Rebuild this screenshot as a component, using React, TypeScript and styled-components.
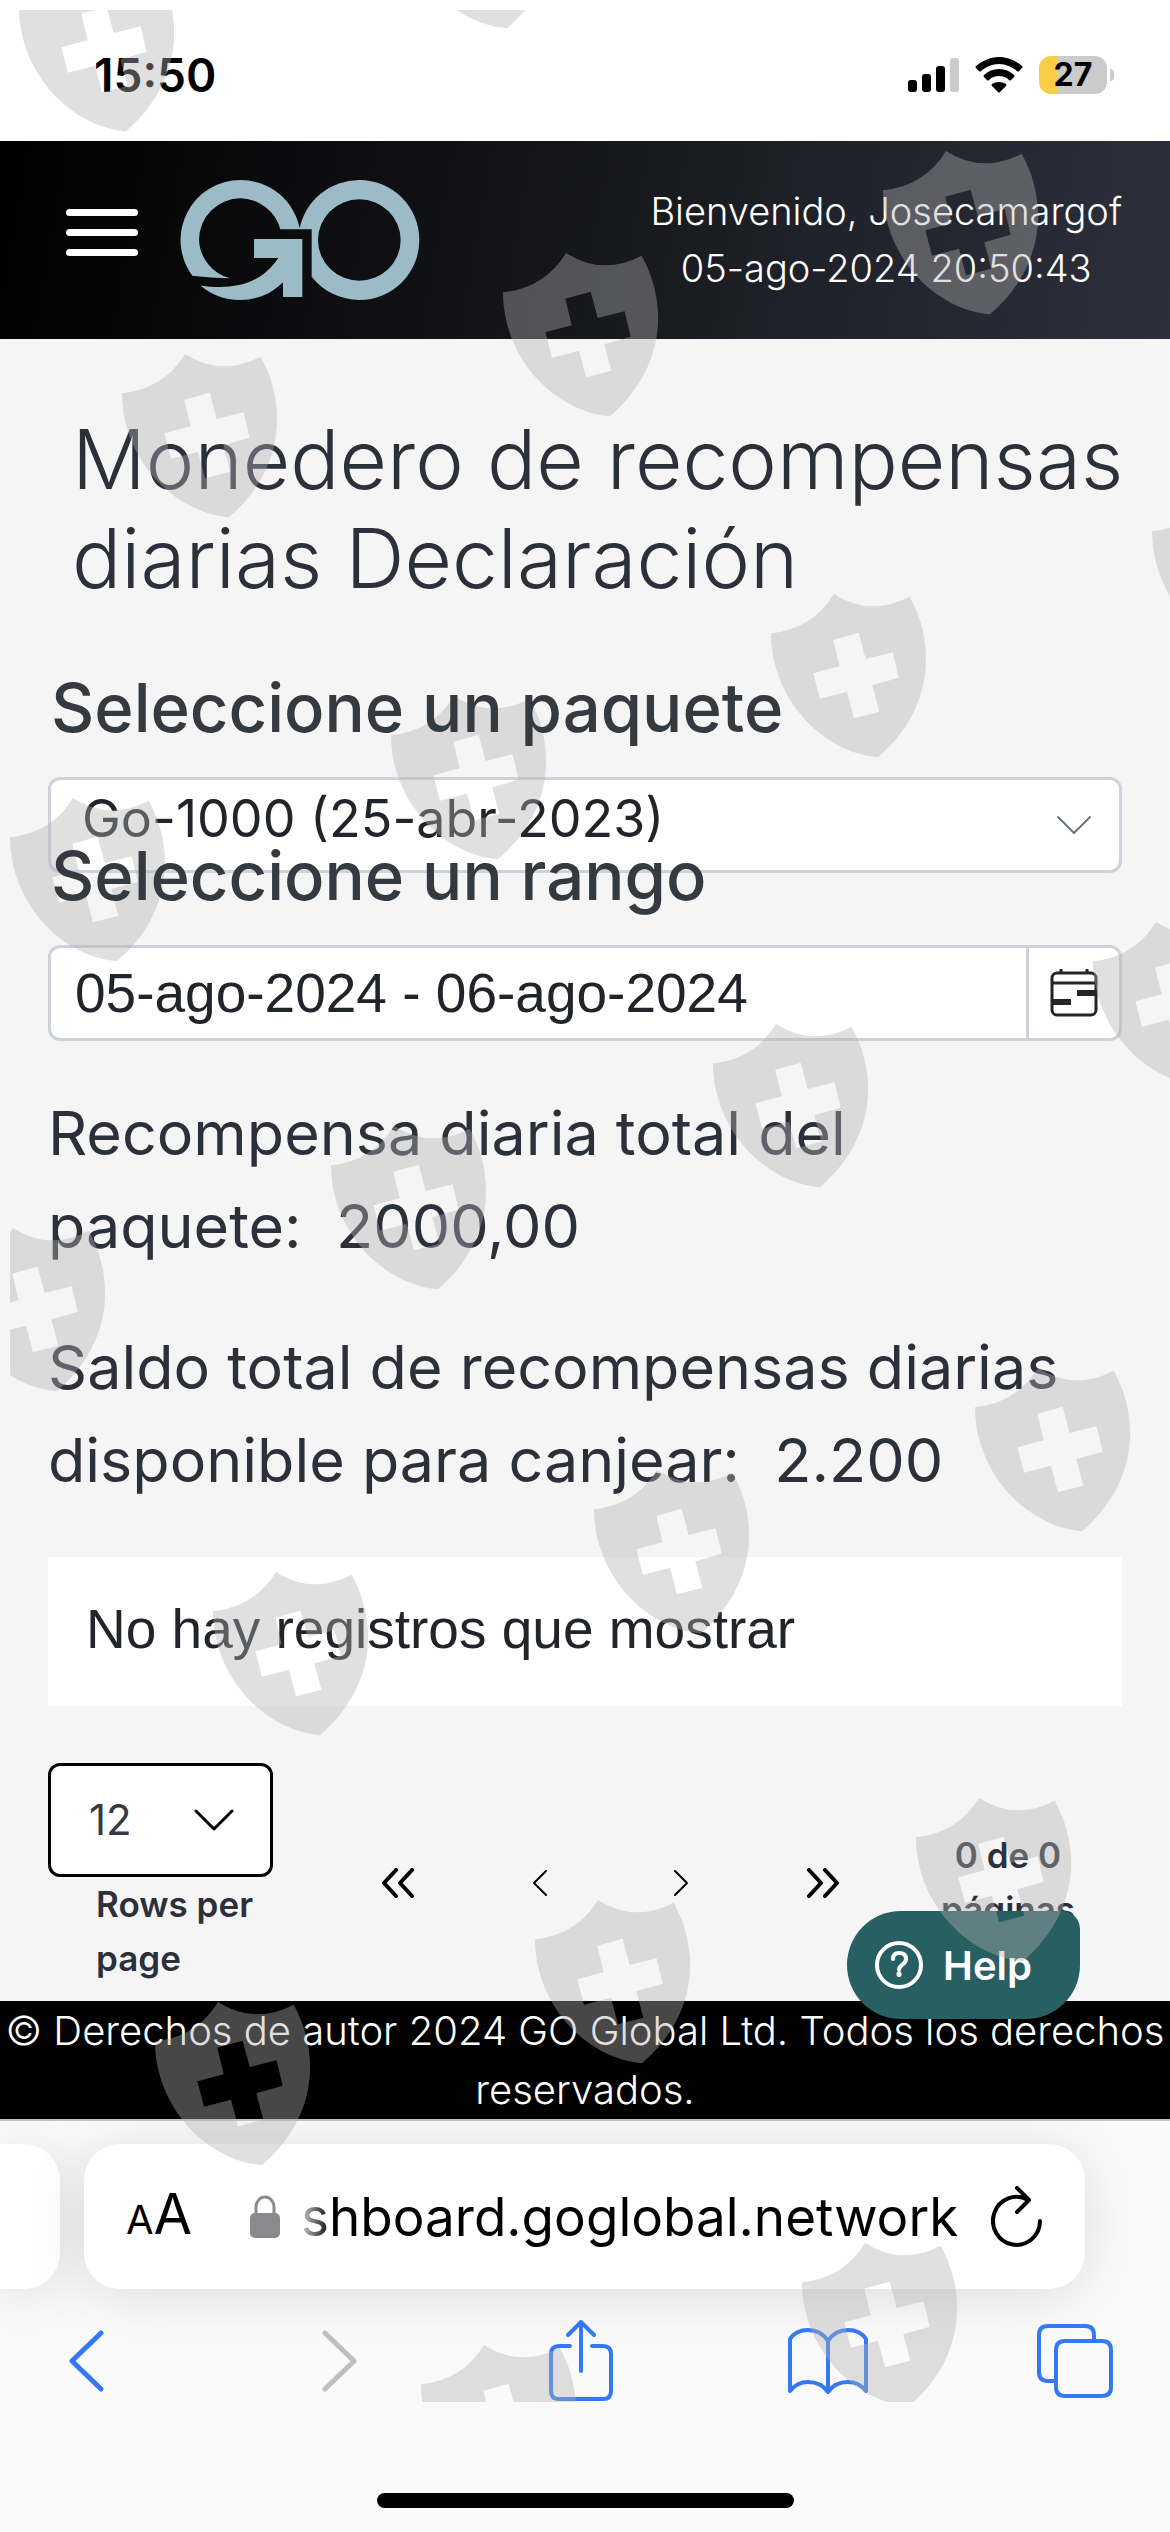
import React from 'react';
import styled, { createGlobalStyle } from 'styled-components';

const Global = createGlobalStyle`
  *, *::before, *::after { box-sizing: border-box; }
  body { margin: 0; background: #fafafa; }
  button, select, input { font: inherit; color: inherit; margin: 0; padding: 0; border: 0; background: none; }
  h1, h2, p { margin: 0; font-weight: inherit; }
`;

const sans = `Inter, 'Noto Sans', sans-serif`;
const helvetica = `'Liberation Sans', Arial, sans-serif`;

const Screen = styled.div`
  position: relative;
  overflow: hidden;
  font-family: ${sans};
  color: #2c303b;
`;

const StatusBar = styled.div`
  display: flex;
  align-items: center;
  justify-content: space-between;
  height: 141px;
  padding: 8px 56px 0 94px;
  background: #fff;
  color: #000;
`;

const Clock = styled.time`
  font-size: 46px;
  line-height: 56px;
  font-weight: 600;
`;

const StatusIcons = styled.div`
  display: flex;
  align-items: center;
  gap: 16px;
`;

const Battery = styled.div`
  display: flex;
  align-items: center;
  gap: 3px;
`;

const BatteryBody = styled.div`
  width: 68px;
  height: 38px;
  border-radius: 12px;
  background: linear-gradient(90deg, #f7ce46 27%, #cbcbcb 27%);
  font-size: 32px;
  line-height: 38px;
  font-weight: 700;
  text-align: center;
`;

const BatteryNub = styled.span`
  width: 4px;
  height: 12px;
  border-radius: 0 4px 4px 0;
  background: #cbcbcb;
`;

const Header = styled.header`
  display: flex;
  align-items: center;
  height: 198px;
  padding: 0 48px 0 64px;
  background: linear-gradient(100deg, #000 0%, #1b1c20 60%, #1d2027 65%, #2d303c 100%);
  color: #fff;
`;

const MenuButton = styled.button`
  display: grid;
  gap: 13px;
  width: 76px;
  padding: 4px 2px 20px;

  span {
    height: 7px;
    border-radius: 4px;
    background: #fff;
  }
`;

const LogoLink = styled.a`
  display: block;
  height: 120px;
  margin-left: 40px;
`;

const Welcome = styled.p`
  margin-left: auto;
  font-size: 38px;
  line-height: 57px;
  font-weight: 300;
  text-align: center;
`;

const Main = styled.main`
  padding: 71px 48px 0;
  background: #f5f5f5;
`;

const Title = styled.h1`
  margin: 0 -24px 0 24px;
  font-size: 82px;
  line-height: 99px;
  font-weight: 300;
`;

const Fields = styled.form`
  margin: 58px 0 85px;
`;

const Field = styled.div`
  height: 168px;
`;

const FieldLabel = styled.label`
  position: relative;
  z-index: 1;
  display: block;
  width: max-content;
  margin: 0 0 27px 3px;
  font-size: 67px;
  line-height: 84px;
  font-weight: 500;
  color: #343a40;
`;

const Control = styled.div`
  display: flex;
  align-items: stretch;
  height: 96px;
  border: 3px solid #ced2da;
  border-radius: 12px;
  background: #fff;
  color: #212529;
`;

const PackageSelect = styled.select`
  appearance: none;
  flex: 1;
  min-width: 0;
  padding: 0 0 12px 31px;
  font-size: 52px;
  line-height: 72px;
`;

const SelectArrow = styled.span`
  display: flex;
  align-items: center;
  padding-right: 27px;
  color: #6c757d;
  pointer-events: none;
`;

const RangeInput = styled.input`
  flex: 1;
  min-width: 0;
  padding-left: 24px;
  font-family: ${helvetica};
  font-size: 55px;
`;

const CalendarButton = styled.button`
  display: grid;
  place-items: center;
  width: 93px;
  border-left: 3px solid #ced2da;
`;

const Summary = styled.section`
  display: grid;
  gap: 48px;
  font-size: 61px;
  line-height: 93px;
`;

const EmptyCard = styled.div`
  margin-top: 50px;
  padding: 36px 38px 41px;
  background: #fff;
  color: #212529;
  font-family: ${helvetica};
  font-size: 55px;
  line-height: 72px;
`;

const Pager = styled.nav`
  display: grid;
  grid-template-columns: 225px 1fr 228px;
  margin-top: 57px;
  height: 238px;
  font-size: 35px;
  line-height: 54px;
  font-weight: 600;
`;

const RowsBox = styled.div`
  display: flex;
  align-items: center;
  height: 114px;
  padding-right: 36px;
  border: 3px solid #000;
  border-radius: 12px;
  background: #fff;
  color: #000;
`;

const RowsSelect = styled.select`
  appearance: none;
  flex: 1;
  min-width: 0;
  padding-left: 38px;
  color: #343a40;
  font-size: 42px;
  font-weight: 400;
`;

const RowsLabel = styled.label`
  display: block;
  padding-left: 48px;
`;

const PageButtons = styled.div`
  display: flex;
  justify-content: space-around;
  align-items: flex-start;
  padding: 100px 0 0 54px;
  color: #000;
`;

const PageButton = styled.button`
  display: grid;
  place-items: center;
  width: 48px;
  height: 40px;
`;

const PageCount = styled.p`
  padding-top: 65px;
  text-align: center;
`;

const Footer = styled.footer`
  position: relative;
  background: #000;
  color: #fff;
  font-size: 40px;
  line-height: 59px;
  font-weight: 300;
  text-align: center;
`;

const HelpButton = styled.button`
  position: absolute;
  top: -90px;
  right: 90px;
  display: flex;
  align-items: center;
  gap: 20px;
  height: 108px;
  padding: 0 48px 0 28px;
  border-radius: 54px 18px 54px 54px;
  background: #285f62;
  color: #fff;
  font-size: 40px;
  font-weight: 600;
`;

const BrowserChrome = styled.section`
  padding-top: 23px;
  border-top: 2px solid #c4c4c6;
  background: #fafafa;
`;

const Tabs = styled.div`
  display: flex;
  gap: 24px;
  height: 145px;
`;

const TabEdge = styled.div`
  width: 60px;
  border-radius: 0 36px 36px 0;
  background: #fff;
  box-shadow: 0 6px 60px rgba(0, 0, 0, 0.12);
`;

const AddressBar = styled.div`
  display: flex;
  align-items: center;
  flex: 1;
  min-width: 0;
  margin-right: 85px;
  padding: 0 42px;
  border-radius: 36px;
  background: #fff;
  box-shadow: 0 6px 60px rgba(0, 0, 0, 0.12);
  color: #000;
`;

const TextSizeButton = styled.button`
  display: flex;
  align-items: baseline;
  width: 66px;
  font-size: 56px;
  line-height: 66px;

  small { font-size: 40px; }
`;

const Lock = styled.svg`
  margin: 0 21px 0 58px;
  flex: none;
`;

const Address = styled.input`
  flex: 1;
  min-width: 0;
  font-size: 53px;
  mask-image: linear-gradient(90deg, rgba(0, 0, 0, 0.2), #000 30px);
`;

const ReloadButton = styled.button`
  display: grid;
  place-items: center;
`;

const ToolButton = styled.button`
  display: grid;
  place-items: center;
  width: 80px;
  color: ${(p: { $muted?: boolean }) => (p.$muted ? '#bfbfc0' : '#3478f6')};
`;

const Toolbar = styled.div`
  display: flex;
  align-items: center;
  justify-content: space-between;
  padding: 30px 55px 0 46px;
  height: 114px;
`;

const HomeArea = styled.div`
  display: grid;
  justify-items: center;
  padding: 90px 0 24px;
`;

const HomeIndicator = styled.div`
  width: 417px;
  height: 15px;
  border-radius: 8px;
  background: #000;
`;

const ShieldLayer = styled.svg`
  position: absolute;
  inset: 10px 0 130px 10px;
  width: calc(100% - 10px);
  height: calc(100% - 140px);
  pointer-events: none;
`;

const shields = [
  [400, -135], [19, -32], [883, 151], [503, 253], [122, 354],
  [1152, 492], [771, 594], [391, 696], [10, 798], [1093, 922],
  [713, 1024], [331, 1126], [-50, 1228], [975, 1368], [594, 1470],
  [213, 1572], [916, 1798], [535, 1900], [155, 2002], [802, 2243], [421, 2345],
];

const shieldPath =
  'M0 118 Q125 105 189 0 Q298 70 416 8 C495 150 490 345 321 490 C150 475 0 310 0 118 Z ' +
  'M187 137 L206 217 L127 238 L147 314 L228 293 L249 373 L325 353 L304 274 L383 251 L365 175 L284 195 L263 116 Z';

function Shields() {
  return (
    <ShieldLayer aria-hidden="true">
      {shields.map(([x, y]) => (
        <path
          key={`${x}:${y}`}
          d={shieldPath}
          fill="#b2b2b2"
          fillOpacity="0.4"
          fillRule="evenodd"
          transform={`translate(${x - 10} ${y - 10}) scale(0.3333)`}
        />
      ))}
    </ShieldLayer>
  );
}

function Logo() {
  return (
    <svg width="240" height="120" viewBox="60 60 720 360" fill="#9bbbc7">
      <path
        fillRule="evenodd"
        d="M97 347 A180 180 0 0 1 242 60 A180 180 0 0 1 419 205 A182 182 0 0 1 598 60 A180 180 0 0 1 598 420 A182 182 0 0 1 455 350 V208 H361 A125 125 0 0 0 242 115 A125 125 0 0 0 117 240 A125 125 0 0 0 210 355 Q150 354 97 347 Z M474 240 A124 122 0 1 0 722 240 A124 122 0 1 0 474 240 Z"
      />
      <path d="M282 237 H427 V411 H369 V367 A180 180 0 0 1 242 420 A184 184 0 0 1 122 377 C220 390 300 375 355 294 H282 Z" />
    </svg>
  );
}

function LineIcon({ w, h, d, s = 3 }: { w: number; h: number; d: string; s?: number }) {
  return (
    <svg width={w} height={h} viewBox={`0 0 ${w} ${h}`} fill="none" stroke="currentColor" strokeWidth={s} strokeLinecap="round" strokeLinejoin="round" aria-hidden="true">
      <path d={d} />
    </svg>
  );
}

export default function App() {
  return (
    <>
      <Global />
      <Screen>
        <StatusBar>
          <Clock>15:50</Clock>
          <StatusIcons>
            <svg width="51" height="34" viewBox="0 0 51 34" aria-hidden="true">
              <rect x="0" y="22" width="9" height="12" rx="3" />
              <rect x="14" y="16" width="9" height="18" rx="3" />
              <rect x="28" y="8" width="9" height="26" rx="3" />
              <rect x="42" y="0" width="9" height="34" rx="3" fill="#cbcbcb" />
            </svg>
            <svg width="48" height="36" viewBox="0 0 48 36" aria-hidden="true">
              <path d="M24 0 C33 0 41 4 47 9 Q48 10 47 11 L44 14 Q43 15 42 14 C37 10 31 7 24 7 C17 7 11 10 6 14 Q5 15 4 14 L1 11 Q0 10 1 9 C7 4 15 0 24 0 Z" />
              <path d="M24 12 C30 12 35 14 39 18 Q40 19 39 20 L36 23 Q35 24 34 23 C31 20 28 19 24 19 C20 19 17 20 14 23 Q13 24 12 23 L9 20 Q8 19 9 18 C13 14 18 12 24 12 Z" />
              <path d="M24 25 Q28 25 31 27 Q32 28 31 29 L25 35 Q24 36 23 35 L17 29 Q16 28 17 27 Q20 25 24 25 Z" />
            </svg>
            <Battery>
              <BatteryBody>27</BatteryBody>
              <BatteryNub />
            </Battery>
          </StatusIcons>
        </StatusBar>

        <Header>
          <MenuButton type="button" aria-label="Menú"><span /><span /><span /></MenuButton>
          <LogoLink href="#" aria-label="GO"><Logo /></LogoLink>
          <Welcome>Bienvenido, Josecamargof<br />05-ago-2024 20:50:43</Welcome>
        </Header>

        <Main>
          <Title>Monedero de recompensas diarias Declaración</Title>
          <Fields>
            <Field>
              <FieldLabel htmlFor="package">Seleccione un paquete</FieldLabel>
              <Control>
                <PackageSelect id="package"><option>Go-1000 (25-abr-2023)</option></PackageSelect>
                <SelectArrow><LineIcon w={36} h={20} d="M2 2 L18 18 L34 2" s={2} /></SelectArrow>
              </Control>
            </Field>
            <Field>
              <FieldLabel htmlFor="range">Seleccione un rango</FieldLabel>
              <Control>
                <RangeInput id="range" defaultValue="05-ago-2024 - 06-ago-2024" />
                <CalendarButton type="button" aria-label="Calendario">
                  <svg width="48" height="48" viewBox="0 0 48 48" fill="none" stroke="#212529" strokeWidth="3">
                    <rect x="2" y="4" width="44" height="42" rx="5" />
                    <path d="M2 14 H46 M11 0 V4 M37 0 V4" />
                    <path d="M2 33 H21 M27 24 H46" strokeWidth="6" />
                  </svg>
                </CalendarButton>
              </Control>
            </Field>
          </Fields>
          <Summary>
            <p>Recompensa diaria total del<br />paquete:&nbsp; 2000,00</p>
            <p>Saldo total de recompensas diarias<br />disponible para canjear:&nbsp; 2.200</p>
          </Summary>
          <EmptyCard>No hay registros que mostrar</EmptyCard>
          <Pager>
            <div>
              <RowsBox>
                <RowsSelect id="rows"><option>12</option></RowsSelect>
                <LineIcon w={40} h={22} d="M2 2 L20 20 L38 2" />
              </RowsBox>
              <RowsLabel htmlFor="rows">Rows per page</RowsLabel>
            </div>
            <PageButtons>
              <PageButton type="button" aria-label="Primera"><LineIcon w={34} h={30} d="M15 2 L3 15 L15 28 M31 2 L19 15 L31 28" s={4} /></PageButton>
              <PageButton type="button" aria-label="Anterior"><LineIcon w={16} h={28} d="M14 2 L2 14 L14 26" s={2} /></PageButton>
              <PageButton type="button" aria-label="Siguiente"><LineIcon w={16} h={28} d="M2 2 L14 14 L2 26" s={2} /></PageButton>
              <PageButton type="button" aria-label="Última"><LineIcon w={34} h={30} d="M3 2 L15 15 L3 28 M19 2 L31 15 L19 28" s={4} /></PageButton>
            </PageButtons>
            <PageCount>0 de 0<br />páginas</PageCount>
          </Pager>
        </Main>

        <Footer>
          © Derechos de autor 2024 GO Global Ltd. Todos los derechos reservados.
          <HelpButton type="button">
            <svg width="48" height="48" viewBox="0 0 48 48" fill="none" stroke="#fff" strokeWidth="4" strokeLinecap="round" aria-hidden="true">
              <circle cx="24" cy="24" r="22" />
              <path d="M18 18 Q18 12 24 12 Q31 12 31 18 Q31 21 27 24 Q24 26 24 29" />
              <path d="M24 33 V33.5" strokeWidth="5" />
            </svg>
            Help
          </HelpButton>
        </Footer>

        <BrowserChrome>
          <Tabs>
            <TabEdge />
            <AddressBar>
              <TextSizeButton type="button"><small>A</small>A</TextSizeButton>
              <Lock width="30" height="43" viewBox="0 0 30 43" aria-hidden="true">
                <rect x="0" y="18" width="30" height="25" rx="5" fill="#8a8a8e" />
                <path d="M6 20 V12 A9 10 0 0 1 24 12 V20" fill="none" stroke="#8a8a8e" strokeWidth="3" />
              </Lock>
              <Address aria-label="Dirección" defaultValue="shboard.goglobal.network" />
              <ReloadButton type="button" aria-label="Recargar">
                <svg width="52" height="62" viewBox="0 0 52 62" fill="none" stroke="#000" strokeWidth="4" strokeLinecap="round" strokeLinejoin="round">
                  <path d="M49 35 A23.5 24 0 1 1 37 14 M26 2 L38 14 L26 26" />
                </svg>
              </ReloadButton>
            </AddressBar>
          </Tabs>
          <Toolbar>
            <ToolButton type="button" aria-label="Atrás"><LineIcon w={38} h={62} d="M34 3 L5 31 L34 59" s={5} /></ToolButton>
            <ToolButton type="button" aria-label="Adelante" $muted><LineIcon w={52} h={62} d="M18 3 L47 31 L18 59" s={5} /></ToolButton>
            <ToolButton type="button" aria-label="Compartir">
              <LineIcon w={64} h={82} d="M21 26 H10 Q2 26 2 34 V71 Q2 79 10 79 H54 Q62 79 62 71 V34 Q62 26 54 26 H43 M32 51 V3 M19 15 L32 2 L45 15" s={4} />
            </ToolButton>
            <ToolButton type="button" aria-label="Marcadores">
              <LineIcon w={80} h={68} d="M40 14 Q33 3 20 3 Q8 3 2 12 V64 Q9 55 20 55 Q33 55 40 65 Q47 55 60 55 Q71 55 78 64 V12 Q72 3 60 3 Q47 3 40 14 V65" s={4} />
            </ToolButton>
            <ToolButton type="button" aria-label="Pestañas">
              <LineIcon w={76} h={76} d="M18 58 H11 Q2 58 2 49 V12 Q2 3 11 3 H48 Q57 3 57 12 V18 M28 18 H65 Q74 18 74 27 V64 Q74 73 65 73 H28 Q19 73 19 64 V27 Q19 18 28 18 Z" s={4} />
            </ToolButton>
          </Toolbar>
          <HomeArea><HomeIndicator /></HomeArea>
        </BrowserChrome>
        <Shields />
      </Screen>
    </>
  );
}
